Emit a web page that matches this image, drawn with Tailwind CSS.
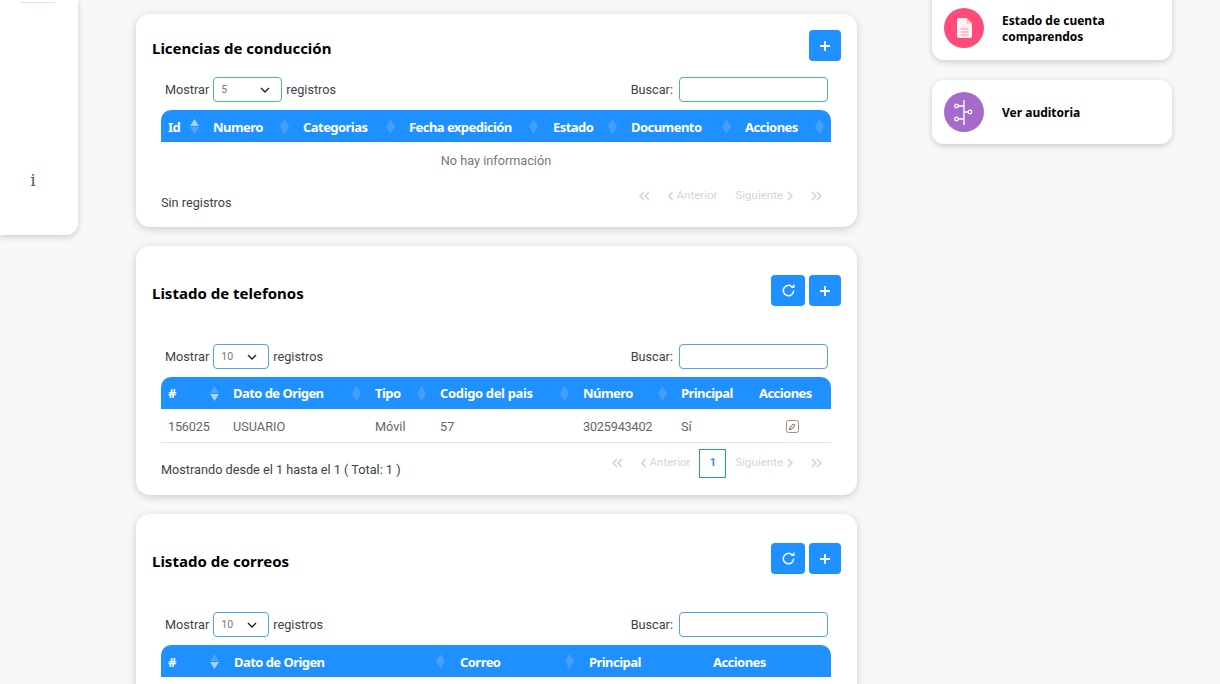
<!DOCTYPE html>
<html lang="es">
<head>
<meta charset="UTF-8" />
<title>Perfil</title>
<script src="https://cdn.jsdelivr.net/npm/@tailwindcss/browser@4"></script>
</head>
<body class="bg-[#f8f8f8] font-['Roboto',sans-serif] text-[12.7px] text-[#3d4248] overflow-hidden">
<div class="h-[684px] overflow-hidden flex items-start">

  <!-- sidebar -->
  <aside class="w-[78px] h-[235px] shrink-0 bg-white rounded-br-xl shadow-[0_2px_6px_rgba(0,0,0,0.18)] flex flex-col items-center">
    <div class="w-9 h-px mt-[2px] ml-[-2px] bg-[#e6e3cf]"></div>
    <span class="mt-[168px] ml-[-12px] font-['DejaVu_Serif',serif] text-[16px] leading-5 text-[#5a4a3a]">i</span>
  </aside>

  <!-- center column -->
  <main class="w-[721px] ml-[58px] pt-[14px] flex flex-col gap-[19px] shrink-0">

    <section class="h-[213px] bg-white rounded-[14px] shadow-[0_2px_8px_rgba(0,0,0,0.18)] px-[16px] pt-[16px]">
      <div class="flex items-center justify-between h-[31px]">
        <h2 class="pt-[6px] font-['Noto_Sans',sans-serif] font-bold text-[15px] text-black">Licencias de conducción</h2>
        <button class="w-8 h-[31px] bg-[#1e90ff] rounded-[4px] flex items-center justify-center">
          <svg width="12" height="12" viewBox="0 0 12 12"><path d="M6 1v10M1 6h10" stroke="#fff" stroke-width="1.8"/></svg>
        </button>
      </div>
      <div class="ml-[9px] mr-[10px] mt-[16px]">
        <div class="flex items-center justify-between h-[25px] pl-[4px] pr-[3px]">
          <div class="flex items-center gap-1">
            <span>Mostrar</span>
            <div class="w-[69px] h-[25px] border border-[#4da3f5] rounded-[4px] flex items-center justify-between pl-[7px] pr-[11px] text-[10.5px] text-[#777]"><span class="pt-[1px]">5</span>
              <svg width="10" height="6" viewBox="0 0 10 6"><path d="M1 1l4 4 4-4" fill="none" stroke="#222" stroke-width="1.4"/></svg>
            </div>
            <span>registros</span>
          </div>
          <div class="flex items-center gap-[6px]">
            <span>Buscar:</span>
            <div class="w-[149px] h-[25px] border border-[#4da3f5] rounded-[4px]"></div>
          </div>
        </div>
        <div class="mt-[8px] h-8 bg-[#1e90ff] rounded-t-[10px] flex text-white font-['Noto_Sans',sans-serif] font-bold text-[13px] tracking-[-0.55px]">
          <div class="w-[45px] px-[7px] flex items-center justify-between"><span class="pt-[4px]">Id</span>
            <svg width="9" height="15" viewBox="0 0 9 15"><path d="M4.5 0L9 7H0z" fill="#a5d2ff"/><path d="M4.5 15L0 8h9z" fill="#4da6ff"/></svg>
          </div>
          <div class="w-[90px] px-[7px] flex items-center justify-between"><span class="pt-[4px]">Numero</span>
            <svg width="9" height="15" viewBox="0 0 9 15"><path d="M4.5 0L9 7.5 4.5 15 0 7.5z" fill="#459fff"/></svg>
          </div>
          <div class="w-[106px] px-[7px] flex items-center justify-between"><span class="pt-[4px]">Categorias</span>
            <svg width="9" height="15" viewBox="0 0 9 15"><path d="M4.5 0L9 7.5 4.5 15 0 7.5z" fill="#459fff"/></svg>
          </div>
          <div class="w-[144px] pl-[7px] pr-[8px] flex items-center justify-between"><span class="pt-[4px]">Fecha expedición</span>
            <svg width="9" height="15" viewBox="0 0 9 15"><path d="M4.5 0L9 7.5 4.5 15 0 7.5z" fill="#459fff"/></svg>
          </div>
          <div class="w-[78px] px-[7px] flex items-center justify-between"><span class="pt-[4px]">Estado</span>
            <svg width="9" height="15" viewBox="0 0 9 15"><path d="M4.5 0L9 7.5 4.5 15 0 7.5z" fill="#459fff"/></svg>
          </div>
          <div class="w-[114px] px-[7px] flex items-center justify-between"><span class="pt-[4px]">Documento</span>
            <svg width="9" height="15" viewBox="0 0 9 15"><path d="M4.5 0L9 7.5 4.5 15 0 7.5z" fill="#459fff"/></svg>
          </div>
          <div class="w-[93px] px-[7px] flex items-center justify-between"><span class="pt-[4px]">Acciones</span>
            <svg width="9" height="15" viewBox="0 0 9 15"><path d="M4.5 0L9 7.5 4.5 15 0 7.5z" fill="#459fff"/></svg>
          </div>
        </div>
        <div class="h-[37px] flex items-center justify-center text-[#777]">No hay información</div>
        <div class="flex justify-between">
          <span class="mt-[14px]">Sin registros</span>
          <div class="flex items-center gap-[18px] h-[32px] pt-[2px] pr-[9px] text-[11.5px] text-[#d4d4d4]">
            <svg width="11" height="10" viewBox="0 0 11 10" fill="none" stroke="#d4d4d4" stroke-width="1.7"><path d="M5 1L1.2 5 5 9M10 1L6.2 5 10 9"/></svg>
            <span class="flex items-center gap-[4px]"><svg width="5" height="10" viewBox="0 0 5 10" fill="none" stroke="#d4d4d4" stroke-width="1.7"><path d="M4.5 1L1 5l3.500 4"/></svg>Anterior</span>
            <span class="flex items-center gap-[4px]">Siguiente<svg width="6" height="10" viewBox="0 0 6 10" fill="none" stroke="#d4d4d4" stroke-width="1.7"><path d="M1 1l3.800 4L1 9"/></svg></span>
            <svg width="11" height="10" viewBox="0 0 11 10" fill="none" stroke="#d4d4d4" stroke-width="1.7"><path d="M1 1l3.800 4L1 9M6 1l3.800 4L6 9"/></svg>
          </div>
        </div>
      </div>
    </section>

    <section class="h-[249px] bg-white rounded-[14px] shadow-[0_2px_8px_rgba(0,0,0,0.18)] px-[16px] pt-[29px]">
      <div class="flex items-center justify-between h-[31px]">
        <h2 class="pt-[6px] font-['Noto_Sans',sans-serif] font-bold text-[15px] text-black">Listado de telefonos</h2>
        <div class="flex gap-[4px]">
          <button class="w-[34px] h-[31px] bg-[#1e90ff] rounded-[4px] flex items-center justify-center">
            <svg width="13" height="13" viewBox="0 0 13 13"><path d="M11.700 6.500a5.200 5.200 0 1 1-1.600-3.700" fill="none" stroke="#fff" stroke-width="1.500"/><path d="M8.500 4h4V0z" fill="#fff"/></svg>
          </button>
          <button class="w-8 h-[31px] bg-[#1e90ff] rounded-[4px] flex items-center justify-center">
            <svg width="12" height="12" viewBox="0 0 12 12"><path d="M6 1v10M1 6h10" stroke="#fff" stroke-width="1.8"/></svg>
          </button>
        </div>
      </div>
      <div class="ml-[9px] mr-[10px] mt-[38px]">
        <div class="flex items-center justify-between h-[25px] pl-[4px] pr-[3px]">
          <div class="flex items-center gap-1">
            <span>Mostrar</span>
            <div class="w-[56px] h-[25px] border border-[#4da3f5] rounded-[4px] flex items-center justify-between pl-[7px] pr-[11px] text-[10.5px] text-[#777]"><span class="pt-[1px]">10</span>
              <svg width="10" height="6" viewBox="0 0 10 6"><path d="M1 1l4 4 4-4" fill="none" stroke="#222" stroke-width="1.4"/></svg>
            </div>
            <span>registros</span>
          </div>
          <div class="flex items-center gap-[6px]">
            <span>Buscar:</span>
            <div class="w-[149px] h-[25px] border border-[#4da3f5] rounded-[4px]"></div>
          </div>
        </div>
        <div class="mt-[8px] h-8 bg-[#1e90ff] rounded-t-[10px] flex text-white font-['Noto_Sans',sans-serif] font-bold text-[13px] tracking-[-0.55px]">
          <div class="w-[65px] px-[7px] flex items-center justify-between"><span class="pt-[2px]">#</span>
            <svg width="9" height="15" viewBox="0 0 9 15"><path d="M4.5 0L9 7H0z" fill="#4da6ff"/><path d="M4.5 15L0 8h9z" fill="#a5d2ff"/></svg>
          </div>
          <div class="w-[142px] px-[7px] flex items-center justify-between"><span class="pt-[2px]">Dato de Origen</span>
            <svg width="9" height="15" viewBox="0 0 9 15"><path d="M4.5 0L9 7.5 4.5 15 0 7.5z" fill="#459fff"/></svg>
          </div>
          <div class="w-[65px] px-[7px] flex items-center justify-between"><span class="pt-[2px]">Tipo</span>
            <svg width="9" height="15" viewBox="0 0 9 15"><path d="M4.5 0L9 7.5 4.5 15 0 7.5z" fill="#459fff"/></svg>
          </div>
          <div class="w-[143px] px-[7px] flex items-center justify-between"><span class="pt-[2px] tracking-[-0.35px]">Codigo del pais</span>
            <svg width="9" height="15" viewBox="0 0 9 15"><path d="M4.5 0L9 7.5 4.5 15 0 7.5z" fill="#459fff"/></svg>
          </div>
          <div class="w-[98px] px-[7px] flex items-center justify-between"><span class="pt-[2px]">Número</span>
            <svg width="9" height="15" viewBox="0 0 9 15"><path d="M4.5 0L9 7.5 4.5 15 0 7.5z" fill="#459fff"/></svg>
          </div>
          <div class="w-[78px] pl-[7px] pt-[2px] flex items-center">Principal</div>
          <div class="w-[79px] pl-[7px] pt-[2px] flex items-center">Acciones</div>
        </div>
        <div class="h-[34px] pt-[2px] flex items-center border-b border-[#dfe2e6] text-[#666]">
          <div class="w-[65px] pl-[7px] tracking-[-0.2px]">156025</div>
          <div class="w-[142px] pl-[7px]">USUARIO</div>
          <div class="w-[65px] pl-[7px]">Móvil</div>
          <div class="w-[143px] pl-[7px]">57</div>
          <div class="w-[98px] pl-[7px] tracking-[-0.2px]">3025943402</div>
          <div class="w-[78px] pl-[7px]">Sí</div>
          <div class="w-[79px] flex justify-center pl-[1px]">
            <svg width="13" height="13" viewBox="0 0 13 13"><rect x=".5" y=".5" width="12" height="12" rx="2" fill="none" stroke="#a89070"/><path d="M3.500 9.500l.6-2.200 3.400-3.400 1.600 1.600-3.400 3.400z" fill="none" stroke="#555"/></svg>
          </div>
        </div>
        <div class="flex justify-between">
          <span class="mt-[17px]">Mostrando desde el 1 hasta el 1 ( Total: 1 )</span>
          <div class="flex items-center gap-[18px] h-[38px] pt-[2px] pr-[9px] text-[11.5px] text-[#d4d4d4]">
            <svg width="11" height="10" viewBox="0 0 11 10" fill="none" stroke="#d4d4d4" stroke-width="1.7"><path d="M5 1L1.2 5 5 9M10 1L6.2 5 10 9"/></svg>
            <span class="flex items-center gap-[4px]"><svg width="5" height="10" viewBox="0 0 5 10" fill="none" stroke="#d4d4d4" stroke-width="1.7"><path d="M4.5 1L1 5l3.500 4"/></svg>Anterior</span>
            <span class="w-[27px] h-[29px] -mx-[9px] mt-[1px] border border-[#1e90ff] flex items-center justify-center text-[#1e90ff] font-bold text-[11px]">1</span>
            <span class="flex items-center gap-[4px]">Siguiente<svg width="6" height="10" viewBox="0 0 6 10" fill="none" stroke="#d4d4d4" stroke-width="1.7"><path d="M1 1l3.800 4L1 9"/></svg></span>
            <svg width="11" height="10" viewBox="0 0 11 10" fill="none" stroke="#d4d4d4" stroke-width="1.7"><path d="M1 1l3.800 4L1 9M6 1l3.800 4L6 9"/></svg>
          </div>
        </div>
      </div>
    </section>

    <section class="h-[300px] bg-white rounded-[14px] shadow-[0_2px_8px_rgba(0,0,0,0.18)] px-[16px] pt-[29px]">
      <div class="flex items-center justify-between h-[31px]">
        <h2 class="pt-[6px] font-['Noto_Sans',sans-serif] font-bold text-[15px] text-black">Listado de correos</h2>
        <div class="flex gap-[4px]">
          <button class="w-[34px] h-[31px] bg-[#1e90ff] rounded-[4px] flex items-center justify-center">
            <svg width="13" height="13" viewBox="0 0 13 13"><path d="M11.700 6.500a5.200 5.200 0 1 1-1.600-3.700" fill="none" stroke="#fff" stroke-width="1.500"/><path d="M8.500 4h4V0z" fill="#fff"/></svg>
          </button>
          <button class="w-8 h-[31px] bg-[#1e90ff] rounded-[4px] flex items-center justify-center">
            <svg width="12" height="12" viewBox="0 0 12 12"><path d="M6 1v10M1 6h10" stroke="#fff" stroke-width="1.8"/></svg>
          </button>
        </div>
      </div>
      <div class="ml-[9px] mr-[10px] mt-[38px]">
        <div class="flex items-center justify-between h-[25px] pl-[4px] pr-[3px]">
          <div class="flex items-center gap-1">
            <span>Mostrar</span>
            <div class="w-[56px] h-[25px] border border-[#4da3f5] rounded-[4px] flex items-center justify-between pl-[7px] pr-[11px] text-[10.5px] text-[#777]"><span class="pt-[1px]">10</span>
              <svg width="10" height="6" viewBox="0 0 10 6"><path d="M1 1l4 4 4-4" fill="none" stroke="#222" stroke-width="1.4"/></svg>
            </div>
            <span>registros</span>
          </div>
          <div class="flex items-center gap-[6px]">
            <span>Buscar:</span>
            <div class="w-[149px] h-[25px] border border-[#4da3f5] rounded-[4px]"></div>
          </div>
        </div>
        <div class="mt-[8px] h-8 bg-[#1e90ff] rounded-t-[10px] flex text-white font-['Noto_Sans',sans-serif] font-bold text-[13px] tracking-[-0.55px]">
          <div class="w-[66px] pl-[7px] pr-[8px] flex items-center justify-between"><span class="pt-[4px]">#</span>
            <svg width="9" height="15" viewBox="0 0 9 15"><path d="M4.5 0L9 7H0z" fill="#4da6ff"/><path d="M4.5 15L0 8h9z" fill="#a5d2ff"/></svg>
          </div>
          <div class="w-[226px] pl-[7px] pr-[8px] flex items-center justify-between"><span class="pt-[4px]">Dato de Origen</span>
            <svg width="9" height="15" viewBox="0 0 9 15"><path d="M4.5 0L9 7.5 4.5 15 0 7.5z" fill="#459fff"/></svg>
          </div>
          <div class="w-[129px] pl-[7px] pr-[8px] flex items-center justify-between"><span class="pt-[4px]">Correo</span>
            <svg width="9" height="15" viewBox="0 0 9 15"><path d="M4.5 0L9 7.5 4.5 15 0 7.5z" fill="#459fff"/></svg>
          </div>
          <div class="w-[124px] pl-[7px] pt-[4px] flex items-center">Principal</div>
          <div class="w-[125px] pl-[7px] pt-[4px] flex items-center">Acciones</div>
        </div>
      </div>
    </section>
  </main>

  <!-- right column -->
  <aside class="w-[240px] ml-[75px] mt-[-20px] flex flex-col gap-5 shrink-0">
    <a class="h-[80px] bg-white rounded-xl shadow-[0_2px_6px_rgba(0,0,0,0.18)] flex items-center pl-3 pt-[16px]">
      <span class="w-10 h-10 rounded-full bg-[#ff4b7a] flex items-center justify-center shrink-0 mt-[-1px]">
        <svg width="15" height="20" viewBox="0 0 15 20"><path d="M2 0h7.500L15 5.500V18a2 2 0 0 1-2 2H2a2 2 0 0 1-2-2V2a2 2 0 0 1 2-2z" fill="#fff3f6"/><path d="M9.500 0L15 5.500H9.500z" fill="#ffc09a"/><path d="M3.500 11h8M3.500 14h8M3.500 17h8" stroke="#ff8aa8" stroke-width="1.200"/></svg>
      </span>
      <span class="ml-[18px] pt-[2px] font-['Noto_Sans',sans-serif] font-bold text-[12px] leading-4 text-black">Estado de cuenta<br>comparendos</span>
    </a>
    <a class="h-[64px] bg-white rounded-xl shadow-[0_2px_6px_rgba(0,0,0,0.18)] flex items-center pl-3">
      <span class="w-10 h-10 rounded-full bg-[#a66bca] flex items-center justify-center shrink-0">
        <svg width="20" height="25" viewBox="0 0 20 25" fill="none" stroke="#fff" stroke-width="1.300"><path d="M10 0v25M4 6h6M10 12h4M4 19h6"/><circle cx="2.500" cy="6" r="1.800"/><circle cx="2.500" cy="19" r="1.800"/><circle cx="16" cy="12" r="1.800"/></svg>
      </span>
      <span class="ml-[18px] pt-[2px] font-['Noto_Sans',sans-serif] font-bold text-[12px] leading-4 text-black">Ver auditoria</span>
    </a>
  </aside>
</div>
</body>
</html>
